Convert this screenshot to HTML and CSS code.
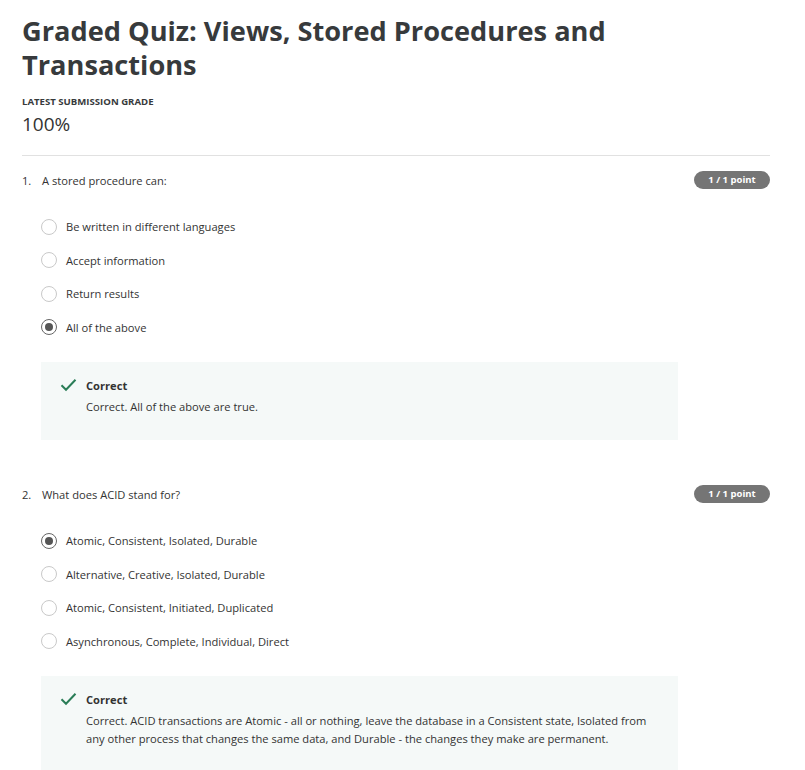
FILE: index.html
```html
<!DOCTYPE html>
<html>
<head>
<meta charset="utf-8">
<link rel="stylesheet" href="styles.css">
</head>
<body>
<main class="page">
  <header class="head">
    <h1 class="title">Graded Quiz: Views, Stored Procedures and Transactions</h1>
    <div class="grade-label">LATEST SUBMISSION GRADE</div>
    <div class="grade">100%</div>
  </header>

  <section class="question">
    <div class="q-row">
      <span class="q-num">1.</span>
      <span class="q-text">A stored procedure can:</span>
      <span class="badge">1 / 1 point</span>
    </div>
    <ul class="options">
      <li class="option"><span class="radio"></span>Be written in different languages</li>
      <li class="option"><span class="radio"></span>Accept information</li>
      <li class="option"><span class="radio"></span>Return results</li>
      <li class="option"><span class="radio checked"></span>All of the above</li>
    </ul>
    <div class="feedback">
      <svg class="check" width="17" height="14" viewBox="0 0 17 14"><path d="M1.5 7.2 L6 11.8 L15.5 1.8" fill="none" stroke="#2a7d57" stroke-width="2"/></svg>
      <div class="fb-body">
        <div class="fb-title">Correct</div>
        <div class="fb-text">Correct. All of the above are true.</div>
      </div>
    </div>
  </section>

  <section class="question q2">
    <div class="q-row">
      <span class="q-num">2.</span>
      <span class="q-text">What does ACID stand for?</span>
      <span class="badge">1 / 1 point</span>
    </div>
    <ul class="options">
      <li class="option"><span class="radio checked"></span>Atomic, Consistent, Isolated, Durable</li>
      <li class="option"><span class="radio"></span>Alternative, Creative, Isolated, Durable</li>
      <li class="option"><span class="radio"></span>Atomic, Consistent, Initiated, Duplicated</li>
      <li class="option"><span class="radio"></span>Asynchronous, Complete, Individual, Direct</li>
    </ul>
    <div class="feedback">
      <svg class="check" width="17" height="14" viewBox="0 0 17 14"><path d="M1.5 7.2 L6 11.8 L15.5 1.8" fill="none" stroke="#2a7d57" stroke-width="2"/></svg>
      <div class="fb-body">
        <div class="fb-title">Correct</div>
        <div class="fb-text">Correct. ACID transactions are Atomic - all or nothing, leave the database in a Consistent state, Isolated from any other process that changes the same data, and Durable - the changes they make are permanent.</div>
      </div>
    </div>
  </section>
</main>
</body>
</html>
```

FILE: styles.css
```css
* { box-sizing: border-box; }
body {
  margin: 0;
  background: #fff;
  font-family: "Open Sans", "Noto Sans", sans-serif;
  color: #333;
}
.page {
  width: 770px;
  padding: 0 0 0 22px;
}
.head {
  padding-top: 14px;
  border-bottom: 1px solid #e1e1e1;
  padding-bottom: 19px;
}
.title {
  margin: 0;
  font-size: 27.2px;
  line-height: 34px;
  font-weight: 700;
  color: #373a3c;
  width: 640px;
}
.grade-label {
  margin-top: 13px;
  font-size: 9.6px;
  font-weight: 700;
  line-height: 14px;
  color: #373a3c;
}
.grade {
  margin-top: 3px;
  font-size: 19px;
  line-height: 24px;
  color: #333;
}
.question {
  padding-top: 14px;
}
.q2 { padding-top: 44px; }
.q-row {
  display: flex;
  align-items: center;
  height: 20px;
  font-size: 11.15px;
}
.q-num { width: 20px; }
.q-text { flex: 1; }
.badge {
  background: #757575;
  color: #fff;
  font-size: 9.5px;
  font-weight: 700;
  height: 18px;
  line-height: 18px;
  width: 76px;
  text-align: center;
  border-radius: 9px;
}
.options {
  list-style: none;
  margin: 0;
  padding: 0 0 0 19px;
  margin-top: 20px;
}
.option {
  display: flex;
  align-items: center;
  height: 33.5px;
  font-size: 11.15px;
  color: #333;
}
.radio {
  width: 16px;
  height: 16px;
  border: 1.5px solid #c9c9c9;
  border-radius: 50%;
  margin-right: 9px;
  display: flex;
  align-items: center;
  justify-content: center;
}
.radio.checked {
  border-color: #666;
}
.radio.checked::after {
  content: "";
  width: 8px;
  height: 8px;
  border-radius: 50%;
  background: #555;
}
.feedback {
  margin: 18px 0 0 19px;
  width: 637px;
  background: #f5f9f8;
  display: flex;
  padding: 15px 20px 24px 19px;
}
.check {
  margin-top: 1px;
  margin-right: 9px;
  flex-shrink: 0;
}
.fb-title {
  font-size: 11.15px;
  font-weight: 700;
  line-height: 18px;
  color: #333;
}
.fb-text {
  margin-top: 3px;
  font-size: 11.15px;
  line-height: 18px;
  color: #333;
}
```
